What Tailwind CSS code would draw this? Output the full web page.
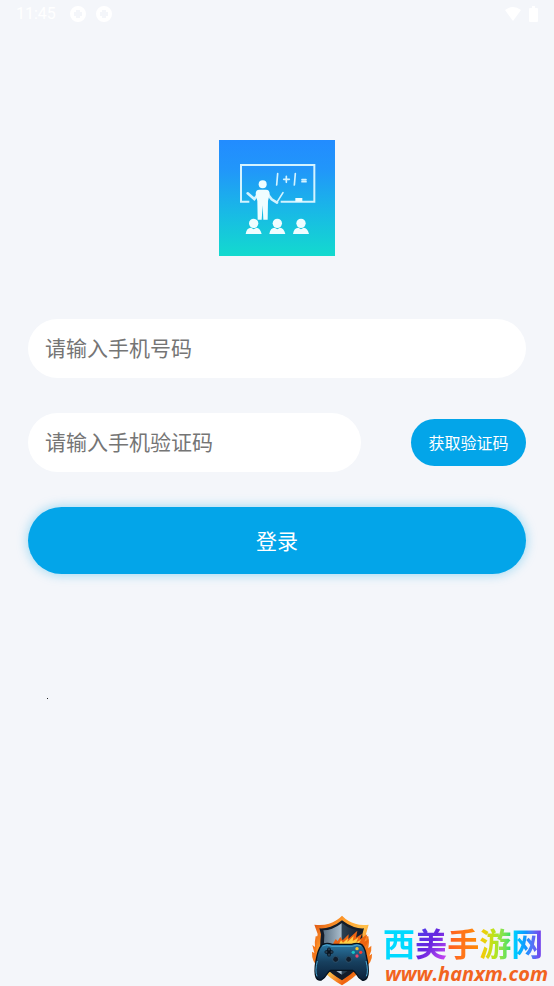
<!DOCTYPE html>
<html lang="zh-CN">

<head>
    <meta charset="UTF-8">
    <meta name="viewport" content="width=device-width, initial-scale=1.0">
    <title>登录</title>
    <script src="https://cdn.jsdelivr.net/npm/@tailwindcss/browser@4"></script>
</head>

<body class="min-h-screen flex flex-col bg-[#f4f6fa] font-['Noto_Sans','Noto_Sans_CJK_SC',sans-serif]">
    <!-- Status bar -->
    <header class="h-7 px-4 flex items-center justify-between text-white">
        <div class="flex items-center gap-[10px]">
            <span class="pr-1 font-[Roboto,sans-serif] text-base">11:45</span>
            <svg class="w-4 h-4" viewBox="0 0 16 16" fill="currentColor" fill-rule="evenodd">
                <path d="M8 0a8 8 0 1 0 0 16A8 8 0 1 0 8 0zM6 4h4v2h2v4h-2v2H6v-2H4V6h2z" />
            </svg>
            <svg class="w-4 h-4" viewBox="0 0 16 16" fill="currentColor" fill-rule="evenodd">
                <path d="M8 0a8 8 0 1 0 0 16A8 8 0 1 0 8 0zM6 4h4v2h2v4h-2v2H6v-2H4V6h2z" />
            </svg>
        </div>
        <div class="flex items-center gap-2">
            <svg class="w-4 h-4" viewBox="0 0 16 16" fill="currentColor">
                <path d="M0 4Q8-2 16 4L8 15z" />
            </svg>
            <svg class="w-[9px] h-4" viewBox="0 0 9 16" fill="currentColor">
                <path d="M3 0h3v2h2q1 0 1 1v12q0 1-1 1H1q-1 0-1-1V3q0-1 1-1h2z" />
            </svg>
        </div>
    </header>

    <main class="px-7 pt-28">
        <!-- Logo -->
        <svg class="w-[116px] h-[116px] mx-auto" viewBox="21 24 348 348">
            <defs>
                <linearGradient id="logoBg" x1="0" y1="0" x2="0" y2="1">
                    <stop offset="0" stop-color="#228cff" />
                    <stop offset=".25" stop-color="#2196fa" />
                    <stop offset=".65" stop-color="#18bce4" />
                    <stop offset="1" stop-color="#13dace" />
                </linearGradient>
            </defs>
            <path fill="url(#logoBg)" d="M21 24h348v348H21z" />
            <g fill="none" stroke="#d3f3ff" stroke-linecap="round">
                <path stroke-width="6" stroke-linecap="butt" d="M112 209H87V99h220v110H206" />
                <path stroke-width="5" d="M197 125l-3 34M250 125l-3 34M215 142h17M223 133v18M270 143h12M270 149h12" />
                <path stroke-width="5" d="M213 182l-17 27" />
                <path stroke-width="8" d="M107 184l20 17 17-21M162 180l17 22 16 10" />
            </g>
            <g fill="#effdff">
                <path d="M250 198h21v11h-21z" />
                <circle cx="152" cy="157" r="12" />
                <path d="M142 173h20q11 0 11 13l-5 21-1 56h-13l-2-43-3 43h-12l-1-56-5-21q0-13 11-13z" />
                <g id="student">
                    <circle cx="125" cy="274" r="14" />
                    <path d="M101 306q3-19 16-19l8 5 8-5q12 1 16 19z" />
                </g>
                <use href="#student" x="71" />
                <use href="#student" x="142" />
            </g>
        </svg>

        <form class="pt-[63px] flex flex-col" onsubmit="return false">
            <input type="tel" aria-label="手机号码" placeholder="请输入手机号码"
                class="w-full h-[59px] px-[17px] pb-[2px] rounded-full bg-white text-[21px] text-gray-800 placeholder:text-[#757575] outline-none">
            <div class="mt-[35px] flex items-center gap-[50px]">
                <input type="text" aria-label="手机验证码" placeholder="请输入手机验证码"
                    class="flex-1 min-w-0 h-[59px] px-[17px] pb-[2px] rounded-full bg-white text-[21px] text-gray-800 placeholder:text-[#757575] outline-none">
                <button type="button"
                    class="h-[47px] w-[115px] rounded-full bg-[#03a5e9] text-base text-white whitespace-nowrap">获取验证码</button>
            </div>
            <button type="submit"
                class="mt-[35px] w-full h-[67px] pt-[2px] rounded-full bg-[#03a5e9] text-[21px] text-white shadow-[0_0_12px_#03a5e966]">登录</button>
        </form>

        <div class="mt-[124px] ml-[19px] w-px h-px bg-[#222]"></div>
    </main>

    <!-- Site mark -->
    <footer class="mt-auto pr-[6px] flex items-end justify-end gap-[6px]">
        <svg class="w-[62px] h-[71px]" viewBox="10 12 186 213">
            <defs>
                <linearGradient id="fire" x1="0" y1="0" x2="1" y2="1">
                    <stop offset="0" stop-color="#d9480f" />
                    <stop offset=".3" stop-color="#ff9c2b" />
                    <stop offset=".55" stop-color="#ffc04a" />
                    <stop offset=".75" stop-color="#f0610e" />
                    <stop offset="1" stop-color="#ffc239" />
                </linearGradient>
                <linearGradient id="steel" x1="0" y1="0" x2="1" y2="0">
                    <stop offset="0" stop-color="#5b7286" />
                    <stop offset=".47" stop-color="#a9bccb" />
                    <stop offset=".5" stop-color="#2d4052" />
                    <stop offset="1" stop-color="#121d2b" />
                </linearGradient>
                <linearGradient id="pad" x1="0" y1="0" x2="0" y2="1">
                    <stop offset="0" stop-color="#2b79a6" />
                    <stop offset=".5" stop-color="#17405f" />
                    <stop offset="1" stop-color="#0a2039" />
                </linearGradient>
            </defs>
            <!-- flames behind the shield -->
            <path fill="#f4781d" d="M24 76q-4 18-2 32l-8-6 6 24-7-4q-2 30 22 50h134q26-18 24-44l-8 6q8-16 6-30l-9 8q4-20 0-36z" />
            <path fill="url(#fire)" d="M103 14q18 18 40 24 16 6 40 3l-8 28q10 70-14 108-22 24-58 46-36-20-60-46Q18 139 30 69l-10-28q26 3 44-3 24-8 39-24z" />
            <path fill="#141c29" d="M103 28q16 13 36 20 14 5 30 4l-5 18q6 66-12 98-20 22-49 40-31-18-51-40-20-32-12-98l-5-18q18 1 34-5 20-7 34-19z" />
            <path fill="url(#steel)" d="M103 36q14 12 32 18 12 4 25 4l-3 14q4 58-13 86-14 16-41 33-28-17-43-33-15-30-10-86l-3-14q13 0 26-5 16-6 30-17z" />
            <path fill="#ed6412" d="M76 98l8-14 6 6 8-12 7 10 18-18-1 14 27-25-4 21 18-12-6 17 22-15-9 22 14-7-8 18-8 8z" />
            <path fill="#ffce45" d="M94 99l6-11 6 7 15-13-2 11 19-18-3 15 17-10-6 14 14-8-9 15z" />
            <path fill="url(#pad)" stroke="#07131f" stroke-width="4" d="M48 99q12-4 26 1h58q14-5 26-1 13 4 18 36 8 34 5 56-4 20-18 16-9-4-17-18-5-8-11-11H69q-6 3-11 11-8 14-17 18-15 3-18-16-3-22 5-56 7-32 20-36z" />
            <path fill="none" stroke="#4aa5d0" stroke-width="3" d="M44 105q12-7 29 1h60q16-8 28-1M29 150q-8 30-1 46M175 150q8 30 1 46" />
            <path fill="none" stroke="#08121e" stroke-width="11" stroke-linecap="round" d="M64 115v16M56 123h16" />
            <path fill="none" stroke="#4b6a80" stroke-width="3" d="M64 112v6M64 128v6M53 123h6M69 123h6" />
            <g fill="#101d2c" stroke="#2c516c" stroke-width="3">
                <circle cx="84" cy="145" r="9" />
                <circle cx="123" cy="145" r="9" />
            </g>
            <circle cx="148" cy="113" r="5" fill="#ffc528" />
            <circle cx="137" cy="124" r="5" fill="#16c5c5" />
            <circle cx="159" cy="124" r="5" fill="#fa3e32" />
            <circle cx="148" cy="135" r="5" fill="#ef4668" />
        </svg>
        <div class="font-bold">
            <div class="pl-1 flex text-[32px] leading-10 text-transparent font-['Noto_Sans_CJK_SC',sans-serif]">
                <span class="bg-clip-text bg-[#00d9ff]">西</span>
                <span class="bg-clip-text bg-linear-to-br from-[#4145ef] via-[#6724df] to-[#d844f5]">美</span>
                <span class="bg-clip-text bg-linear-to-r from-[#ff5b23] to-[#ff8c00]">手</span>
                <span class="bg-clip-text bg-linear-to-r from-[#ffc400] via-[#b5e51d] to-[#20df68]">游</span>
                <span class="bg-clip-text bg-linear-to-r from-[#00ddff] via-[#168fff] to-[#7628e8]">网</span>
            </div>
            <a href="http://www.hanxm.com" class="block pl-[6px] text-[20px] leading-6 italic text-[#f2641f] font-['Open_Sans',sans-serif]">www.hanxm.com</a>
        </div>
    </footer>
</body>

</html>
